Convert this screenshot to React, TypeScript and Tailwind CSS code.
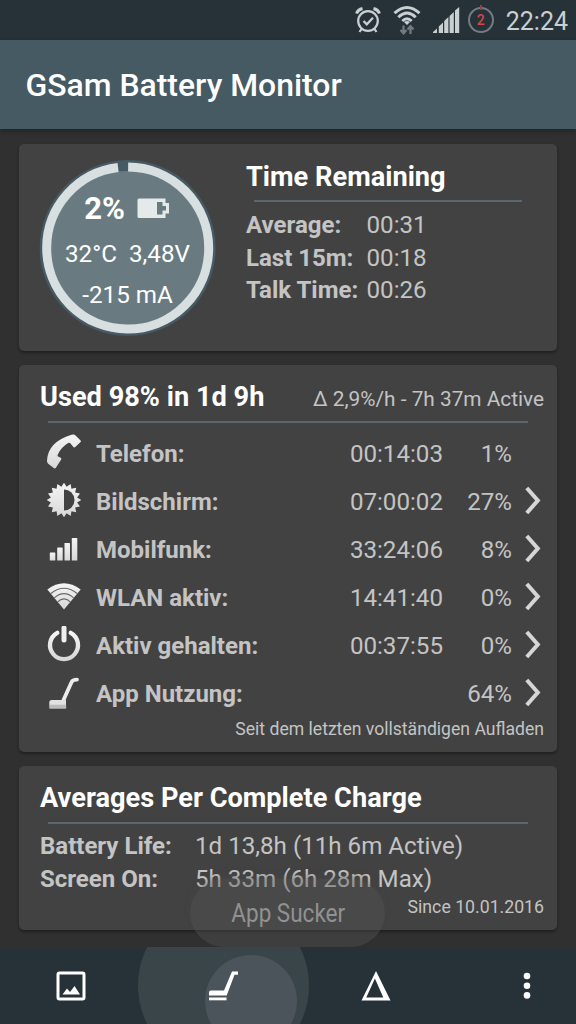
import React from "react";

type UsageRow = {
  label: string;
  time?: string;
  percent: string;
  icon: React.ReactNode;
  link?: boolean;
};

const PhoneIcon = () => (
  <svg width="36" height="36" viewBox="0 0 36 36" fill="url(#metal)">
    <path d="M25.500.8q2.600-.8 4.300 1l4.800 4.600q.8.900 0 1.700l-5.300 5q-1 .9-1.900-.1L24.300 9.200q-.9-.9-2.100-.2Q14.600 13.500 11.600 21q-.4 1 .5 1.500l2.600 1.300q1.100.6.500 1.700l-5.300 8.200q-.8 1.300-2.200.4l-5.500-4.300Q.8 28.600 1 26.500 2 8 25.500.8z" />
  </svg>
);

// 16 zackige Sonne, rechte Hälfte offen
const ScreenIcon = () => {
  const points = Array.from({ length: 32 }, (_, i) => {
    const a = (i * Math.PI) / 16;
    const r = i % 2 === 0 ? 17.3 : 13.4;
    return `${18 + r * Math.sin(a)},${18 - r * Math.cos(a)}`;
  }).join(" ");
  return (
    <svg width="36" height="36" viewBox="0 0 36 36">
      <polygon points={points} fill="url(#metal)" />
      <path d="M18 7.500a10.500 10.500 0 0 1 0 21z" fill="#424242" />
    </svg>
  );
};

const MobileIcon = () => (
  <svg width="36" height="36" viewBox="0 0 36 36" fill="url(#metal)">
    <rect x="3.800" y="22.500" width="5.500" height="8" rx=".6" />
    <rect x="11.200" y="17.500" width="5.500" height="13" rx=".6" />
    <rect x="18.500" y="13" width="5.500" height="17.500" rx=".6" />
    <rect x="25.800" y="8" width="5.500" height="22.500" rx=".6" />
  </svg>
);

const WifiIcon = () => (
  <svg width="36" height="36" viewBox="0 0 36 36">
    <path d="M18 31.500L1.300 11.500Q18-1 34.700 11.500z" fill="url(#metal)" />
    <g fill="none" stroke="#6a6a6a" strokeWidth="1.100">
      <path d="M4.800 15.500Q18 5 31.200 15.500" />
      <path d="M8.300 19.800Q18 11.500 27.700 19.800" />
      <path d="M11.700 23.900Q18 18 24.300 23.900" />
    </g>
  </svg>
);

const PowerIcon = () => (
  <svg width="36" height="36" viewBox="0 0 36 36" fill="none" stroke="url(#metal)" strokeLinecap="round">
    <path d="M11.300 6.800a14 14 0 1 0 13.400 0" strokeWidth="4.300" />
    <path d="M18 2v12" stroke="#f0f0f0" strokeWidth="5" />
  </svg>
);

const VacuumIcon = () => (
  <svg width="36" height="36" viewBox="0 0 36 36">
    <path d="M17.500 26L25.500 8.200Q26.600 5.600 31 5.600" fill="none" stroke="#ececec" strokeWidth="3.800" strokeLinecap="round" />
    <path d="M5.500 26h14.500v5H3.300v-2.200q0-2.800 2.200-2.800z" fill="#e2e2e2" />
    <rect x="3.200" y="30.800" width="17" height="4" rx=".8" fill="#bcbcbc" />
  </svg>
);

const ChevronIcon = () => (
  <svg width="20" height="32" viewBox="0 0 20 32" fill="none" stroke="#d6d6d6" strokeWidth="4">
    <path d="M3.800 3L14.800 15.500L3.800 28" />
  </svg>
);

const rows: UsageRow[] = [
  { label: "Telefon:", time: "00:14:03", percent: "1%", icon: <PhoneIcon /> },
  { label: "Bildschirm:", time: "07:00:02", percent: "27%", icon: <ScreenIcon />, link: true },
  { label: "Mobilfunk:", time: "33:24:06", percent: "8%", icon: <MobileIcon />, link: true },
  { label: "WLAN aktiv:", time: "14:41:40", percent: "0%", icon: <WifiIcon />, link: true },
  { label: "Aktiv gehalten:", time: "00:37:55", percent: "0%", icon: <PowerIcon />, link: true },
  { label: "App Nutzung:", percent: "64%", icon: <VacuumIcon />, link: true },
];

const remaining = [
  ["Average:", "00:31"],
  ["Last 15m:", "00:18"],
  ["Talk Time:", "00:26"],
];

const averages = [
  ["Battery Life:", "1d 13,8h (11h 6m Active)"],
  ["Screen On:", "5h 33m (6h 28m Max)"],
];

const StatusBar = () => (
  <div className="flex h-10 shrink-0 items-center justify-end bg-[#263238] pr-2 text-[#c9d0d2]">
    <svg width="26" height="28" viewBox="0 0 26 28" fill="none" stroke="currentColor" className="mr-3">
      <circle cx="13" cy="15" r="9.800" strokeWidth="2.200" />
      <path d="M8.500 15l3.300 3.300 6.200-6.500" strokeWidth="2.300" />
      <path d="M1.500 7.500q1.500-4 6-5M24.500 7.500q-1.500-4-6-5" strokeWidth="3" />
      <path d="M6.500 23l-2 3M19.500 23l2 3" strokeWidth="2.200" />
    </svg>
    <svg width="28" height="30" viewBox="0 0 28 30" fill="none" stroke="currentColor" className="mr-3">
      <path d="M1.500 8.200Q14-3 26.500 8.200M5.300 12.200Q14 4 22.700 12.200M9.300 16Q14 11.500 18.700 16" strokeWidth="2.900" />
      <path d="M14 20l-3-3q3-2 6 0z" fill="currentColor" stroke="none" />
      <path d="M10.500 20.500v7M7.500 25l3 3.300 3-3.300M17.500 29v-7M14.500 24.500l3-3.300 3 3.300" stroke="#727b80" strokeWidth="2.200" />
    </svg>
    <svg width="27" height="27" viewBox="0 0 27 27" fill="currentColor" className="mr-2">
      <path d="M0 26v-1l4-3.500V26zM5.800 26v-6.500l4.200-4V26zM11.200 26V14l4.200-4V26zM16.600 26V9l4.200-4V26zM22 26V3.500L26.200 0v26z" />
    </svg>
    <div className="relative mr-3 flex h-[26px] w-[26px] items-center justify-center rounded-full border-2 border-[#727d82] text-[14px] font-medium text-[#d34848]">
      <span className="absolute -top-1 left-2.5 h-[5px] w-0.5 bg-[#a33b3f]" />
      2
    </div>
    <span className="mt-[3px] text-[25px] leading-none">22:24</span>
  </div>
);

const Divider = ({ className = "" }: { className?: string }) => (
  <div className={`h-0.5 shrink-0 bg-[#59676f] ${className}`} />
);

const Gauge = () => (
  <div className="relative h-[178px] w-[178px] shrink-0 text-white">
    <svg width="178" height="178" viewBox="0 0 178 178" className="absolute inset-0">
      <circle cx="88.700" cy="89" r="88" fill="#455a64" />
      <circle cx="88.700" cy="89" r="77" fill="#697b81" />
      <circle
        cx="88.700"
        cy="89"
        r="81"
        fill="none"
        stroke="#d8dfe1"
        strokeWidth="9"
        pathLength="100"
        strokeDasharray="98 2"
        transform="rotate(-89.700 88.700 89)"
      />
    </svg>
    <div className="relative flex h-full flex-col items-center whitespace-nowrap pt-[34px]">
      <div className="mr-0.5 flex h-8 items-center gap-3">
        <span className="text-[31px] font-bold leading-8">2%</span>
        <svg width="33" height="21" viewBox="0 0 33 21" className="-mt-0.5">
          <path d="M2 .5h26.500v4.500H32v10.500h-3.500V20H2Q.5 20 .5 18.500V2Q.5.500 2 .5z" fill="#e4e9e9" />
          <path d="M20 4h5.500v4H29v4.500h-3.500v4H20z" fill="#697b81" />
        </svg>
      </div>
      <div className="mr-px mt-[13px] flex h-8 items-center gap-3 text-[24.200px]">
        <span>32°C</span>
        <span>3,48V</span>
      </div>
      <div className="mr-px mt-[9px] flex h-8 items-center text-[24.200px]">-215 mA</div>
    </div>
  </div>
);

export default function App() {
  return (
    <div className="relative flex h-[1024px] w-[576px] flex-col overflow-hidden bg-[#303030] font-[Roboto,sans-serif] text-[#c4c4c4]">
      <svg width="0" height="0" className="absolute">
        <defs>
          <linearGradient id="metal" x1="0" y1="0" x2="0" y2="1">
            <stop offset="0" stopColor="#f5f5f5" />
            <stop offset="1" stopColor="#d8d8d8" />
          </linearGradient>
        </defs>
      </svg>

      <StatusBar />
      <header className="flex h-[89px] shrink-0 items-center bg-[#455a62] pl-[25.500px] pt-0.5 text-[31.900px] font-medium text-white shadow-[0_2px_5px_rgba(0,0,0,0.3)]">
        GSam Battery Monitor
      </header>

      <main className="flex grow flex-col gap-3.5 whitespace-nowrap pl-[19px] pr-[19px] pt-[15px] text-[24.150px]">
        <section className="flex h-[207px] shrink-0 rounded-[5px] bg-[#424242] pl-5 pt-[15px] shadow-[0_2px_3px_rgba(0,0,0,0.35)]">
          <Gauge />
          <div className="ml-[29px] flex w-[276px] flex-col">
            <h2 className="pt-px text-[27.200px] font-bold leading-[34px] text-white">Time Remaining</h2>
            <Divider className="ml-2 mt-[6px]" />
            <div className="mt-[7px] flex flex-col">
              {remaining.map(([label, value]) => (
                <div key={label} className="flex h-[32.500px] items-center">
                  <span className="w-[120.500px] text-[24px] font-bold">{label}</span>
                  <span>{value}</span>
                </div>
              ))}
            </div>
          </div>
        </section>

        <section className="flex h-[387px] shrink-0 flex-col rounded-[5px] bg-[#424242] pl-[21px] pr-[13px] pt-[15px] shadow-[0_2px_3px_rgba(0,0,0,0.35)]">
          <div className="flex h-[35px] items-center justify-between">
            <h2 className="text-[27.200px] font-bold text-white">Used 98% in 1d 9h</h2>
            <span className="mt-[5px] text-[20.800px]">Δ 2,9%/h - 7h 37m Active</span>
          </div>
          <Divider className="ml-2 mr-4 mt-[6px]" />
          <div className="mt-[7px] flex flex-col">
            {rows.map((row) => (
              <div key={row.label} className="flex h-12 items-center">
                <div className="ml-[6px] mr-[14px] -mt-1">{row.icon}</div>
                <span className="grow text-[24px] font-bold">{row.label}</span>
                <span>{row.time}</span>
                <span className="w-[69px] text-right">{row.percent}</span>
                <div className="-mt-0.5 ml-[11px] mr-px w-5">{row.link && <ChevronIcon />}</div>
              </div>
            ))}
          </div>
          <div className="-mt-px text-right text-[17.600px] leading-6">Seit dem letzten vollständigen Aufladen</div>
        </section>

        <section className="flex h-[164px] shrink-0 flex-col rounded-[5px] bg-[#424242] pl-[21px] pr-[13px] pt-[15px] shadow-[0_2px_3px_rgba(0,0,0,0.35)]">
          <h2 className="text-[27.200px] font-bold leading-[34px] text-white">Averages Per Complete Charge</h2>
          <Divider className="ml-2 mr-4 mt-[7px]" />
          <div className="mt-[6px] flex flex-col">
            {averages.map(([label, value]) => (
              <div key={label} className="flex h-[32.500px] items-center">
                <span className="w-[155px] text-[24px] font-bold">{label}</span>
                <span>{value}</span>
              </div>
            ))}
          </div>
          <div className="text-right text-[17.700px] leading-6">Since 10.01.2016</div>
        </section>
      </main>

      <nav className="relative h-[77px] shrink-0 overflow-hidden bg-[#263238]">
        <div className="absolute -top-[47px] left-[138px] h-[171px] w-[171px] rounded-full bg-[#3a454a]" />
        <div className="absolute left-[205px] top-2 h-[92px] w-[92px] rounded-full bg-[#4b545a]" />
        <div className="relative flex h-full items-center pl-14">
          <svg width="30" height="30" viewBox="0 0 30 30" fill="none" stroke="white">
            <rect x="2" y="2" width="26" height="26" rx="1.500" strokeWidth="3" />
            <path d="M6.500 23.500l4.500-6 3 3.500 4.500-6 5.500 8.500z" fill="white" stroke="none" />
          </svg>
          <svg width="30" height="30" viewBox="0 0 30 30" fill="white" className="ml-[122px]">
            <path d="M24 .5h6v3.200h-3.500L18.700 24.500H1v-3q0-2 2-2h13z" />
            <rect x="1" y="26.500" width="17.500" height="2.800" />
          </svg>
          <svg width="30" height="30" viewBox="0 0 30 30" fill="white" fillRule="evenodd" className="ml-[123px]">
            <path d="M15 0l14.500 29.500H.5zM13.900 7.500L5.300 26.500h17z" />
          </svg>
          <svg width="8" height="28" viewBox="0 0 8 28" fill="white" className="ml-[132px]">
            <circle cx="4" cy="4" r="3.300" />
            <circle cx="4" cy="13.700" r="3.300" />
            <circle cx="4" cy="23.400" r="3.300" />
          </svg>
        </div>
      </nav>

      {/* Tooltip über der unteren Leiste */}
      <div className="absolute left-[190px] top-[879px] flex h-[68px] w-[195px] items-center justify-center rounded-full bg-[#565656]/40 pt-px text-[25px] text-[#919191] shadow-[0_-6px_8px_-4px_rgba(74,74,74,0.5)]">
        <span className="ml-0.5 origin-center scale-x-90">App Sucker</span>
      </div>
    </div>
  );
}
